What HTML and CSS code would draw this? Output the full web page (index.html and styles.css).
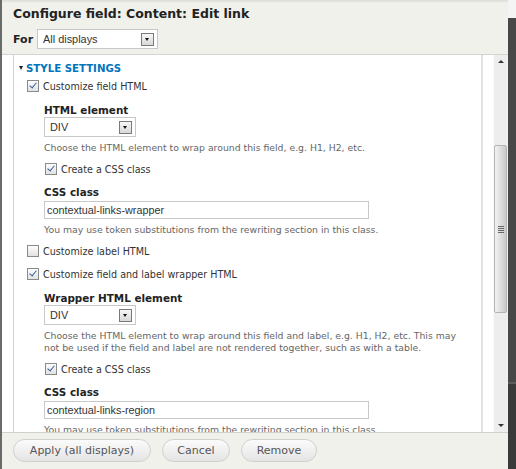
FILE: index.html
```html
<!DOCTYPE html>
<html lang="en">
<head>
  <meta charset="UTF-8" />
  <title>Configure field</title>
  <link rel="stylesheet" href="styles.css">
</head>
<body>
  <div class="edge-left"></div>

  <div class="dialog">
    <!-- Header -->
    <div class="dialog-header">
      <h1>Configure field: Content: Edit link</h1>
      <div class="for-row">
        <span class="for-label">For</span>
        <div class="select wide">
          <span>All displays</span>
          <span class="select-arrow"></span>
        </div>
      </div>
    </div>

    <!-- Scrolling content -->
    <div class="dialog-body">
      <div class="scroll-area">
        <div class="fieldset">
          <div class="legend"><span class="tri"></span>STYLE SETTINGS</div>

          <div class="check-row first">
            <span class="cb checked"></span>Customize field HTML
          </div>
          <div class="sub">
            <div class="field-label">HTML element</div>
            <div class="select small"><span>DIV</span><span class="select-arrow"></span></div>
            <div class="desc">Choose the HTML element to wrap around this field, e.g. H1, H2, etc.</div>
            <div class="check-row">
              <span class="cb checked"></span>Create a CSS class
            </div>
            <div class="field-label">CSS class</div>
            <div class="text-input">contextual-links-wrapper</div>
            <div class="desc">You may use token substitutions from the rewriting section in this class.</div>
          </div>

          <div class="check-row">
            <span class="cb"></span>Customize label HTML
          </div>
          <div class="check-row">
            <span class="cb checked"></span>Customize field and label wrapper HTML
          </div>
          <div class="sub">
            <div class="field-label">Wrapper HTML element</div>
            <div class="select small"><span>DIV</span><span class="select-arrow"></span></div>
            <div class="desc">Choose the HTML element to wrap around this field and label, e.g. H1, H2, etc. This may not be used if the field and label are not rendered together, such as with a table.</div>
            <div class="check-row">
              <span class="cb checked"></span>Create a CSS class
            </div>
            <div class="field-label">CSS class</div>
            <div class="text-input">contextual-links-region</div>
            <div class="desc">You may use token substitutions from the rewriting section in this class.</div>
          </div>
        </div>
      </div>

      <div class="scrollbar">
        <div class="sb-btn up"></div>
        <div class="sb-track-top"></div>
        <div class="sb-thumb"><span class="grip"></span></div>
        <div class="sb-track-bottom"></div>
        <div class="sb-btn down"></div>
      </div>
    </div>

    <!-- Footer buttons -->
    <div class="dialog-footer">
      <button class="btn apply">Apply (all displays)</button>
      <button class="btn cancel">Cancel</button>
      <button class="btn remove">Remove</button>
    </div>
  </div>

  <div class="edge-right">
    <div class="edge-top"></div>
    <div class="edge-mid"></div>
    <div class="edge-line"></div>
    <div class="edge-low"></div>
  </div>
</body>
</html>
```

FILE: styles.css
```css
body {
  margin: 0;
  display: flex;
  height: 469px;
  overflow: hidden;
  font-family: "DejaVu Sans", Verdana, sans-serif;
  color: #333;
  background-color: #f1f1ec;
}

/* Window edges */
.edge-left {
  width: 2px;
  background: #6a6a6a;
}

.edge-right {
  width: 8px;
  display: flex;
  flex-direction: column;
}

.edge-top {
  height: 18px;
  background: #f4f4f4;
}

.edge-mid {
  flex: 1;
  background: #484848;
}

.edge-line {
  height: 2px;
  background: #5c5c5c;
}

.edge-low {
  height: 85px;
  background: #3a3a3a;
}

.dialog {
  flex: 1;
  display: flex;
  flex-direction: column;
}

/* Header */
.dialog-header {
  height: 55px;
  box-sizing: border-box;
  padding: 6px 0 0 11px;
  background: linear-gradient(#dcdcd6, #f1f1ec 3px);
  border-bottom: 1px solid #d4d4d0;
}

.dialog-header h1 {
  margin: 0;
  font-size: 12.5px;
  line-height: 16px;
  font-weight: bold;
  color: #222;
}

.for-row {
  display: flex;
  align-items: center;
  gap: 4px;
  margin-top: 7px;
}

.for-label {
  font-size: 11px;
  font-weight: bold;
  color: #222;
}

/* Selects */
.select {
  display: flex;
  align-items: center;
  justify-content: space-between;
  box-sizing: border-box;
  height: 20px;
  padding: 0 3px 0 5px;
  background: #fff;
  border: 1px solid #c8c8c8;
  font-family: "Liberation Sans", Arial, sans-serif;
  font-size: 10.9px;
  color: #333;
}

.select.wide {
  width: 121px;
}

.select.small {
  width: 92px;
}

.select-arrow {
  position: relative;
  width: 11px;
  height: 11px;
  border: 1px solid #7a7a7a;
  background: linear-gradient(#f6f6f6, #d8d8d8);
}

.select-arrow::after {
  content: "";
  position: absolute;
  left: 3px;
  top: 4px;
  border-left: 2.5px solid transparent;
  border-right: 2.5px solid transparent;
  border-top: 3px solid #111;
}

/* Body */
.dialog-body {
  height: 377px;
  display: flex;
}

.scroll-area {
  flex: 1;
  overflow: hidden;
  background: #fff;
  padding-left: 11px;
}

.fieldset {
  width: 470px;
  height: 100%;
  box-sizing: border-box;
  border-left: 1px solid #d2d2d2;
  border-right: 2px solid #e2e2e2;
  padding: 6px 0 0 5px;
}

.legend {
  display: flex;
  align-items: center;
  height: 14px;
  font-size: 10.2px;
  font-weight: bold;
  color: #0074bd;
}

.tri {
  width: 0;
  height: 0;
  margin-right: 3px;
  border-left: 2.5px solid transparent;
  border-right: 2.5px solid transparent;
  border-top: 4px solid #222;
}

.check-row {
  display: flex;
  align-items: center;
  height: 14px;
  margin-top: 9px;
  margin-left: 8px;
  font-size: 9.6px;
  color: #333;
}

.check-row.first {
  margin-top: 4px;
}

.sub + .check-row,
.sub .check-row {
  margin-top: 8px;
}

.sub .check-row {
  margin-left: 1px;
}

.cb {
  position: relative;
  width: 10px;
  height: 10px;
  margin-right: 4px;
  border: 1px solid #8a8a8a;
  background: linear-gradient(#fdfdfd, #e2e2e2);
}

.cb.checked::after {
  content: "";
  position: absolute;
  left: 3px;
  top: 0px;
  width: 3px;
  height: 6px;
  border-right: 1.5px solid #3b5d9c;
  border-bottom: 1.5px solid #3b5d9c;
  transform: rotate(40deg);
}

.sub {
  padding-left: 25px;
}

.field-label {
  height: 14px;
  line-height: 14px;
  margin-top: 10px;
  margin-bottom: 0;
  font-size: 10.4px;
  font-weight: bold;
  color: #222;
}

.sub .check-row + .field-label {
  margin-top: 9px;
}

.desc {
  margin-top: 5px;
  width: 430px;
  font-size: 9.3px;
  line-height: 12px;
  color: #666;
}

.text-input {
  box-sizing: border-box;
  width: 325px;
  height: 18px;
  margin-top: 2px;
  padding: 0 2px;
  border: 1px solid #c8c8c8;
  font-family: "Liberation Sans", Arial, sans-serif;
  font-size: 10.8px;
  line-height: 16px;
  color: #333;
}

/* Fake scrollbar */
.scrollbar {
  width: 13px;
  margin-right: 1px;
  display: flex;
  flex-direction: column;
  background: #ededed;
  border-left: 1px solid #fafafa;
}

.sb-btn {
  height: 13px;
  position: relative;
}

.sb-btn::after {
  content: "";
  position: absolute;
  left: 4px;
  border-left: 3px solid transparent;
  border-right: 3px solid transparent;
}

.sb-btn.up::after {
  top: 5px;
  border-bottom: 3px solid #333;
}

.sb-btn.down::after {
  top: 5px;
  border-top: 3px solid #333;
}

.sb-track-top {
  height: 77px;
}

.sb-thumb {
  height: 168px;
  box-sizing: border-box;
  border: 1px solid #b4b4b4;
  border-radius: 2px;
  background: linear-gradient(90deg, #f2f2f2, #dadada 60%, #c8c8c8);
  display: flex;
  align-items: center;
  justify-content: center;
}

.grip {
  width: 6px;
  height: 7px;
  background: repeating-linear-gradient(#666 0 1px, transparent 1px 2px);
}

.sb-track-bottom {
  flex: 1;
}

/* Footer */
.dialog-footer {
  height: 36px;
  box-sizing: border-box;
  border-top: 1px solid #d0d0cc;
  background: #f1f1ec;
  display: flex;
  align-items: center;
  gap: 11px;
  padding-left: 11px;
}

.btn {
  height: 23px;
  padding: 0 14px;
  border: 1px solid #cfcfcf;
  border-radius: 12px;
  background: linear-gradient(#fbfbfb, #e4e4e4);
  font-family: "DejaVu Sans", Verdana, sans-serif;
  font-size: 11px;
  color: #555;
}

.btn.apply {
  width: 138px;
}

.btn.cancel {
  width: 68px;
}

.btn.remove {
  width: 76px;
}
```
